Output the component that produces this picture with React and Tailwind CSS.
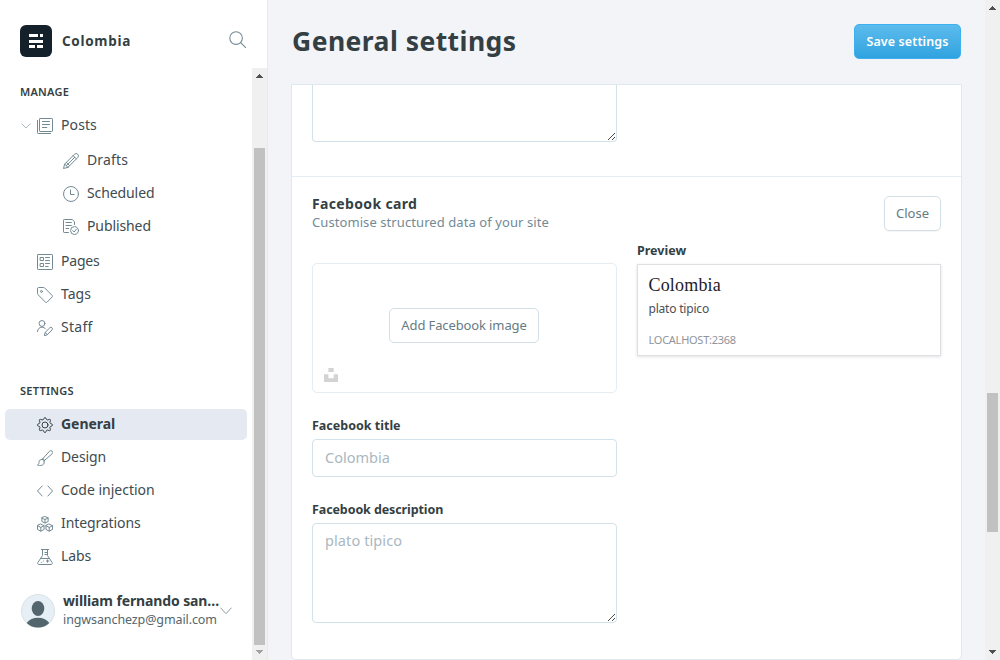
const Svg = ({ children, className = 'w-4 h-4' }) => (
  <svg viewBox="0 0 24 24" fill="none" stroke="currentColor" strokeWidth="1.5" strokeLinecap="round" strokeLinejoin="round" className={`shrink-0 ${className}`}>
    {children}
  </svg>
);

const icons = {
  posts: (
    <>
      <rect x="3.75" y=".75" width="19.5" height="19.5" rx="1" />
      <path d="M.75 3.75v18.5a1 1 0 0 0 1 1h18.5M8.2 5.250h10.600M8.2 9.750h10.600M8.200 14.250h6.500" />
    </>
  ),
  drafts: (
    <>
      <path d="M7.4 21.5.75 23.25 2.5 16.6 17.2 1.9a3.4 3.4 0 0 1 4.9 4.9L7.4 21.5zM2.5 16.6l4.9 4.9M15.2 3.9l4.9 4.9M4.9 19 17.6 6.4M5 14.1l4.9 4.9" />
    </>
  ),
  scheduled: (
    <>
      <circle cx="12" cy="12" r="11.2" />
      <path d="M11.25 6v6.750h5.5" />
    </>
  ),
  published: (
    <>
      <path d="M8.3 20.250H1.75a1 1 0 0 1-1-1V1.750a1 1 0 0 1 1-1h12.200l3.300 3.500v4M4.500 5.250h8M4.500 9.750h8M4.500 14.250h4" />
      <circle cx="17.300" cy="17.300" r="5.950" />
      <path d="m14.700 17.500 2 2 3.500-4.300" />
    </>
  ),
  pages: (
    <>
      <rect x=".75" y=".75" width="22.500" height="22.500" rx="1" />
      <path d="M5.250 5.250h4.500v4.500h-4.500zM5.250 14.250h4.500v4.500h-4.500zM12.750 5.250h6M12.750 9.750h6M12.750 14.250h6M12.750 18.750h4" />
    </>
  ),
  tags: (
    <>
      <path d="M.75 2.250A1.500 1.500 0 0 1 2.250.75h7.900a1.500 1.500 0 0 1 1.100.45l11.600 11.600a1.500 1.500 0 0 1 0 2.100l-7.900 7.900a1.500 1.500 0 0 1-2.100 0L1.200 11.200a1.500 1.500 0 0 1-.45-1.100z" />
      <circle cx="6.700" cy="6.700" r="1.500" />
    </>
  ),
  staff: (
    <>
      <circle cx="7.500" cy="5.200" r="4.400" />
      <path d="M.75 17.500c0-4 3-6.700 6.700-6.700 2.300 0 4.200 1 5.400 2.600M11.200 23.200l1-4.500 7-7a2.200 2.200 0 0 1 3.300 3.200l-7 7zM12.400 18.700l3.200 3.200" />
    </>
  ),
  general: (
    <>
      <path d="m10.500 2.300.4-.9a1.300 1.300 0 0 1 2.200 0l1 2.100a1.700 1.700 0 0 0 2.100.9l2.300-.8a1.300 1.300 0 0 1 1.700 1.700l-.8 2.300a1.700 1.700 0 0 0 .9 2.100l2.200 1a1.400 1.400 0 0 1 0 2.500l-2.200 1a1.700 1.700 0 0 0-.9 2.200l.8 2.300a1.300 1.300 0 0 1-1.700 1.700l-2.300-.8a1.700 1.700 0 0 0-2.100.9l-1 2.200a1.300 1.300 0 0 1-2.400 0l-1-2.200a1.700 1.700 0 0 0-2.100-.9l-2.300.8a1.300 1.300 0 0 1-1.700-1.700l.8-2.300a1.700 1.700 0 0 0-.9-2.200l-2.200-1a1.400 1.400 0 0 1 0-2.500l2.200-1a1.700 1.700 0 0 0 .9-2.100l-.8-2.300a1.300 1.300 0 0 1 1.700-1.700l2.300.8a1.700 1.700 0 0 0 2.100-.9z" />
      <circle cx="12" cy="12" r="4.500" />
    </>
  ),
  design: (
    <>
      <path d="M9.200 12.500 18.700 1.900a2.700 2.700 0 0 1 4 3.700L12 15.100zM9.200 12.500l-1.500 1.700M12 15.100l-1.600 1.600M7.700 14.200c-3.600-.3-4.700 2-4.700 4.500 0 2-.7 3.300-2.200 3.700 3.500 2 10.400 1 10.100-4.700-.1-1.800-1.400-3.300-3.200-3.500z" />
    </>
  ),
  code: <path d="M7.700 4.500.75 12l7 7.500M16.300 4.500l7 7.500-7 7.500" />,
  integrations: (
    <>
      <path d="m12 .75 4.700 2.200v5.300L12 10.500 7.300 8.250V2.950zM7.300 3 12 5.300 16.700 3M12 5.300v5.200" />
      <path d="m5.700 12.200 4.900 2.300v5.700l-4.900 2.500-4.900-2.500v-5.700zM.8 14.500l4.900 2.600 4.900-2.600M5.700 17.100v5.600" />
      <path d="m18.300 12.200 4.900 2.300v5.700l-4.900 2.500-4.900-2.500v-5.700zM13.400 14.500l4.900 2.600 4.900-2.600M18.300 17.100v5.600" />
    </>
  ),
  labs: (
    <>
      <path d="M6.500.75h11M8.250.75v9L1.300 20.300a1.900 1.900 0 0 0 1.600 2.950h18.200a1.900 1.900 0 0 0 1.600-2.950L15.750 9.750v-9M12 5.250h3.800M12 8.250h3.800M5.200 14.250h13M14 18h4M15.750 16.300v3.500M9.500 18v.1M6.500 20v.1" />
    </>
  ),
};

const NavItem = ({ icon, label, active, tight = 'tracking-normal' }) => (
  <div className={`flex h-[31px] items-center rounded-[5px] pl-8 ${active ? 'bg-[#e5eaf2] font-bold text-[#343f44]' : 'text-[#3e4b50]'}`}>
    <Svg className={`mt-px h-4 w-4 ${active ? 'text-[#343f44]' : 'text-[#738a94]'}`}>{icons[icon]}</Svg>
    <span className={`mb-0.5 ml-2 whitespace-nowrap ${tight}`}>{label}</span>
  </div>
);

const SubItem = ({ icon, label, tight = 'tracking-normal' }) => (
  <div className="flex h-[31px] items-center pl-[58px] text-[#3e4b50]">
    <Svg className="mt-px h-4 w-4 text-[#738a94]">{icons[icon]}</Svg>
    <span className={`mb-0.5 ml-2 ${tight}`}>{label}</span>
  </div>
);

const Arrow = ({ down, className }) => (
  <svg viewBox="0 0 7 4" shapeRendering="crispEdges" className={`h-1 w-[7px] fill-current ${className}`}>
    <path d={down ? 'M0 0h7v1H0zM1 1h5v1H1zM2 2h3v1H2zM3 3h1v1H3z' : 'M3 0h1v1H3zM2 1h3v1H2zM1 2h5v1H1zM0 3h7v1H0z'} />
  </svg>
);

const Grip = () => (
  <svg viewBox="0 0 8 8" shapeRendering="crispEdges" className="absolute right-0 bottom-px h-2 w-2 fill-[#4a4a4a]">
    {[0, 1, 2, 3, 4, 5, 6].map((i) => (
      <rect key={i} x={i} y={7 - i} width="1" height="1" />
    ))}
    {[4, 5, 6].map((i) => (
      <rect key={i} x={i} y={11 - i} width="1" height="1" />
    ))}
  </svg>
);

function Sidebar() {
  return (
    <aside className="flex h-full w-[268px] shrink-0 flex-col border-r border-[#e5e9f0] bg-white">
      <header className="flex h-[68px] shrink-0 items-center pt-[13px] pr-[21px] pl-5">
        <div className="flex h-8 w-8 items-center justify-center rounded-md bg-[#15212a]">
          <svg viewBox="0 0 14 14" shapeRendering="crispEdges" className="h-[14px] w-[14px] fill-white">
            <path d="M0 0h9v3H0zM11 0h3v3h-3zM0 6h14v3H0zM0 11h6v3H0zM8 11h6v3H8z" />
          </svg>
        </div>
        <span className="mt-px ml-[10px] text-[13.500px] font-bold tracking-[0.7px] text-[#343f44]">Colombia</span>
        <Svg className="mb-[2px] ml-auto h-[17px] w-[17px] text-[#738a94]">
          <circle cx="10" cy="10" r="8.900" />
          <path d="m16.500 16.500 7 7" />
        </Svg>
      </header>
      <div className="flex min-h-0 grow">
        <nav className="flex w-[252px] flex-col pr-[5px] pl-[5px] text-sm">
          <h4 className="mt-4 h-4 pl-[15px] text-[11px] leading-4 font-semibold tracking-[0.25px] text-[#343f44]">MANAGE</h4>
          <div className="mt-[10px] flex h-[31px] items-center pl-4 text-[#3e4b50]">
            <svg viewBox="0 0 10 6" fill="none" stroke="#abb8be" className="mt-px h-[6px] w-[10px]">
              <path d="m.7.700 4.300 4.300 4.300-4.300" />
            </svg>
            <Svg className="mt-px ml-[6px] h-4 w-4 text-[#738a94]">{icons.posts}</Svg>
            <span className="mb-0.5 ml-2 tracking-[0.1px]">Posts</span>
          </div>
          <div className="mt-1 flex flex-col gap-[2px]">
            <SubItem icon="drafts" label="Drafts" tight="tracking-[0.15px]" />
            <SubItem icon="scheduled" label="Scheduled" tight="tracking-[-0.1px]" />
            <SubItem icon="published" label="Published" tight="tracking-[-0.1px]" />
          </div>
          <div className="mt-1 flex flex-col gap-[2px]">
            <NavItem icon="pages" label="Pages" tight="tracking-[-0.2px]" />
            <NavItem icon="tags" label="Tags" />
            <NavItem icon="staff" label="Staff" tight="tracking-[0.3px]" />
          </div>
          <h4 className="mt-10 h-4 pl-[15px] text-[11px] leading-4 font-semibold tracking-[0.25px] text-[#343f44]">SETTINGS</h4>
          <div className="mt-[10px] flex flex-col gap-[2px]">
            <NavItem icon="general" label="General" active tight="tracking-[-0.05px]" />
            <NavItem icon="design" label="Design" tight="tracking-[-0.1px]" />
            <NavItem icon="code" label="Code injection" />
            <NavItem icon="integrations" label="Integrations" tight="tracking-[-0.1px]" />
            <NavItem icon="labs" label="Labs" tight="tracking-[-0.1px]" />
          </div>
          <div className="mt-[21px] flex items-center pl-4">
            <svg viewBox="0 0 34 34" className="h-[34px] w-[34px] shrink-0">
              <circle cx="17" cy="17" r="16.500" fill="#e5eff5" stroke="#dae1e3" />
              <ellipse cx="17" cy="14.500" rx="6.300" ry="7.500" fill="#54666d" />
              <path d="M5.700 29c2.500-3.500 6.500-5.200 11.300-5.200s8.800 1.700 11.300 5.200a16.400 16.400 0 0 1-22.600 0z" fill="#54666d" />
            </svg>
            <div className="ml-2 flex w-[157px] flex-col">
              <span className="h-[18px] text-[14px] leading-[16px] font-bold tracking-[-0.12px] whitespace-nowrap text-[#343f44]">william fernando san…</span>
              <span className="h-[18px] text-[12.500px] leading-[18px] tracking-[-0.1px] whitespace-nowrap text-[#54666d]">ingwsanchezp@gmail.com</span>
            </div>
            <svg viewBox="0 0 12 8" fill="none" stroke="#8e9ca2" className="h-2 w-3 shrink-0">
              <path d="m.5.700 5.500 6 5.500-6" />
            </svg>
          </div>
        </nav>
        <div className="flex w-[15px] flex-col items-center bg-[#f0f0f0]">
          <Arrow className="mt-[6px] text-[#505050]" />
          <div className="mt-[70px] h-[497px] w-[11px] bg-[#c1c1c1]" />
          <Arrow down className="mt-[5px] text-[#a3a3a3]" />
        </div>
      </div>
    </aside>
  );
}

export default function App() {
  return (
    <div className="flex h-[660px] w-[1000px] overflow-hidden bg-[#f2f4f8] font-['Noto_Sans',sans-serif]">
      <Sidebar />
      <main className="flex h-full w-[717px] shrink-0 flex-col pr-[23px] pl-[23px]">
        <header className="flex h-[84px] shrink-0 items-center justify-between pr-px pb-px pl-px">
          <h1 className="text-[26.500px] font-bold tracking-[0.45px] whitespace-nowrap text-[#343f44]">General settings</h1>
          <button className="flex h-[35px] w-[107px] items-center justify-center rounded-[5px] border border-[#3eb0ef] bg-linear-to-b from-[#5bbbed] to-[#2fa3df] pt-0.5 text-[12.500px] font-semibold tracking-[0.1px] whitespace-nowrap text-white">
            Save settings
          </button>
        </header>
        <section className="flex h-[576px] w-[671px] flex-col rounded-b-[5px] border border-[#dfe8ef] bg-white">
          <div className="h-[92px] shrink-0 border-b border-[#e3edf4] px-5">
            <div className="relative h-[57px] w-[305px] rounded-b-[4px] border border-t-0 border-[#d3e2ea]">
              <Grip />
            </div>
          </div>
          <div className="flex justify-between px-5 pt-[19px]">
            <div className="flex flex-col">
              <h2 className="h-4 text-sm leading-4 font-bold tracking-[0.35px] text-[#343f44]">Facebook card</h2>
              <p className="h-5 text-[13px] leading-5 tracking-[0.08px] text-[#738a94]">Customise structured data of your site</p>
            </div>
            <button className="flex h-[35px] w-[57px] items-center justify-center rounded-[5px] border border-[#d3dfe6] text-[13px] text-[#667b83] shadow-[0_1px_1px_rgba(0,0,0,0.04)]">Close</button>
          </div>
          <div className="flex gap-5 px-5">
            <div className="flex w-[305px] flex-col pt-[31px]">
              <div className="relative flex h-[130px] items-center justify-center rounded-[5px] border border-[#e3edf3] pr-px">
                <button className="mb-[5px] flex h-[35px] w-[150px] items-center justify-center rounded-[5px] border border-[#d3dfe6] text-[13px] tracking-[-0.12px] whitespace-nowrap text-[#667b83]">
                  Add Facebook image
                </button>
                <svg viewBox="0 0 14 14" className="absolute bottom-[10px] left-[11px] h-[14px] w-[14px] fill-[#d3d3d3]">
                  <path d="M4.400 0h5.300v4H4.400zM0 6.200h4.400v4h5.300v-4H14V14H0z" />
                </svg>
              </div>
              <label className="mt-6 h-[22px] text-[12.500px] leading-[18px] font-bold text-[#343f44]">Facebook title</label>
              <div className="flex h-[38px] items-center rounded-[4px] border border-[#d3e2ea] px-3 text-[14.500px] text-[#aab8bf]">Colombia</div>
              <label className="mt-6 h-[22px] text-[12.500px] leading-[18px] font-bold tracking-[-0.1px] text-[#343f44]">Facebook description</label>
              <div className="relative h-[100px] rounded-[4px] border border-[#d3e2ea] px-3 pt-[6px] text-[14.500px] leading-5 tracking-[0.1px] text-[#aab8bf]">
                plato tipico
                <Grip />
              </div>
            </div>
            <div className="flex w-[304px] flex-col pt-[10px]">
              <h3 className="h-[22px] text-[12.500px] leading-[18px] font-bold text-[#343f44]">Preview</h3>
              <div className="flex h-[92px] flex-col border border-[#dddfe2] px-[10.500px] pt-[10px] shadow-[0_1px_3px_rgba(0,0,0,0.12)]">
                <span className="h-5 font-['Liberation_Serif',serif] text-[18px] leading-5 tracking-[0.18px] text-[#1d2129]">Colombia</span>
                <span className="mt-1 h-5 text-[12px] leading-5 tracking-[-0.2px] text-[#4b4f56]">plato tipico</span>
                <span className="mt-[13px] text-[11px] leading-4 tracking-[-0.25px] text-[#90949c]">LOCALHOST:2368</span>
              </div>
            </div>
          </div>
        </section>
      </main>
      <div className="flex h-full w-[15px] shrink-0 flex-col items-center bg-[#f0f0f0]">
        <Arrow className="mt-[6px] text-[#505050]" />
        <div className="mt-[383px] h-[139px] w-[11px] bg-[#c1c1c1]" />
        <Arrow down className="mt-auto mb-[6px] text-[#505050]" />
      </div>
    </div>
  );
}
